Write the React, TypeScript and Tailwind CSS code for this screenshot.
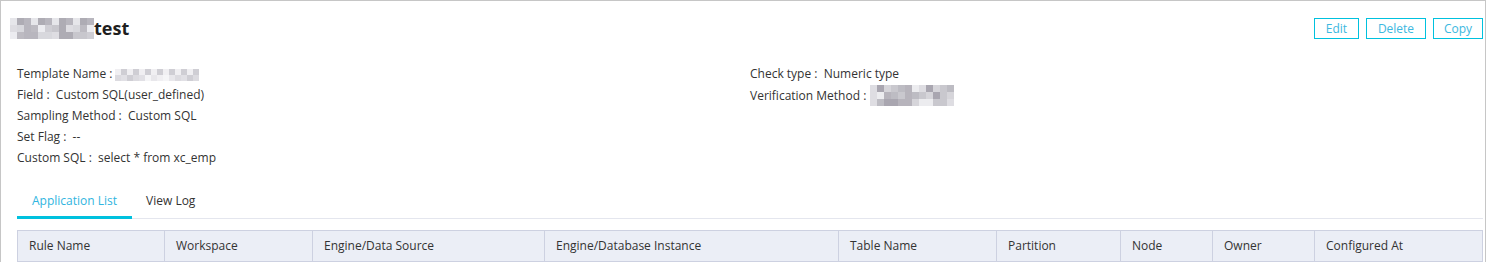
import React from "react";

const Blur = ({ cols, rows, size, colors }: { cols: number; rows: number; size: number; colors: string[] }) => {
  const cells: React.ReactNode[] = [];
  for (let r = 0; r < rows; r++) {
    for (let c = 0; c < cols; c++) {
      const col = colors[(r * 7 + c * 3 + ((c * r) % 5)) % colors.length];
      cells.push(<div key={`${r}-${c}`} style={{ width: size, height: size, background: col }} />);
    }
  }
  return (
    <div className="inline-grid align-middle" style={{ gridTemplateColumns: `repeat(${cols}, ${size}px)` }}>
      {cells}
    </div>
  );
};

const titleBlur = ["#e6e6ea", "#bdbbc2", "#d8d8dd", "#aeacb4", "#cfced4", "#ececf0", "#b8b6be", "#dedde2", "#c8c7cd"];
const lightBlur = ["#f0eff2", "#dcdbe0", "#e8e7eb", "#cfced4", "#f5f5f7", "#e1e0e5"];
const midBlur = ["#dedde2", "#b7b4bc", "#c9c8ce", "#a9a6b0", "#ececef", "#bdbcc3", "#d6d5da"];

const cols = [146, 148, 232, 294, 158, 124, 92, 102, 169];
const heads = [
  "Rule Name",
  "Workspace",
  "Engine/Data Source",
  "Engine/Database Instance",
  "Table Name",
  "Partition",
  "Node",
  "Owner",
  "Configured At",
];

const buttons: [string, string][] = [
  ["Edit", "w-[45px]"],
  ["Delete", "w-[60px]"],
  ["Copy", "w-[50px]"],
];

export default function App() {
  return (
    <div
      className="w-[1487px] h-[262px] bg-white overflow-hidden text-[#333] text-[12px]"
      style={{ fontFamily: '"Open Sans", "Noto Sans", sans-serif' }}
    >
      <div className="w-[1486px] h-[270px] border border-[#c6c6c6] pl-[16px] pr-[2px]">
        <div className="flex items-center justify-between pt-[17px] h-[38px]">
          <div className="flex items-center -ml-[7px]">
            <Blur cols={12} rows={3} size={7} colors={titleBlur} />
            <span className="text-[18px] font-bold leading-[21px] text-[#1f1f1f]">test</span>
          </div>
          <div className="flex gap-[7px]">
            {buttons.map(([t, w]) => (
              <button
                key={t}
                className={`h-[21px] ${w} border border-[#00c1de] text-[#3cb8e0] text-[12px] leading-[19px] bg-white`}
              >
                {t}
              </button>
            ))}
          </div>
        </div>

        <div className="grid grid-cols-[733px_1fr] mt-[24px] leading-[21px]">
          <div>
            <div className="flex items-center">
              <span>Template Name :</span>
              <span className="ml-[3px]">
                <Blur cols={14} rows={2} size={6} colors={lightBlur} />
              </span>
            </div>
            <div>Field :&nbsp; Custom SQL(user_defined)</div>
            <div>Sampling Method :&nbsp; Custom SQL</div>
            <div>Set Flag :&nbsp; --</div>
            <div>Custom SQL :&nbsp; select * from xc_emp</div>
          </div>
          <div>
            <div>Check type :&nbsp; Numeric type</div>
            <div className="flex items-center">
              <span>Verification Method :</span>
              <span className="ml-[4px]">
                <Blur cols={12} rows={3} size={7} colors={midBlur} />
              </span>
            </div>
          </div>
        </div>

        <div className="mt-[22px] flex h-[29px] border-b border-[#e4e6ee]">
          <div className="px-[15px] leading-[21px] pb-[5px] border-b-[3px] border-[#00c1de] text-[#2fb5e0] -mb-px h-[29px]">
            Application List
          </div>
          <div className="px-[14px] leading-[21px] text-[#333]">View Log</div>
        </div>

        <div
          className="mt-[11px] grid border border-[#cdd1e1] bg-[#ebeef6]"
          style={{ gridTemplateColumns: cols.map((c) => `${c}px`).join(" ") }}
        >
          {heads.map((h, i) => (
            <div
              key={h}
              className={`h-[30px] pl-[11px] flex items-center ${i > 0 ? "border-l border-[#cdd1e1]" : ""}`}
            >
              {h}
            </div>
          ))}
        </div>
      </div>
    </div>
  );
}
